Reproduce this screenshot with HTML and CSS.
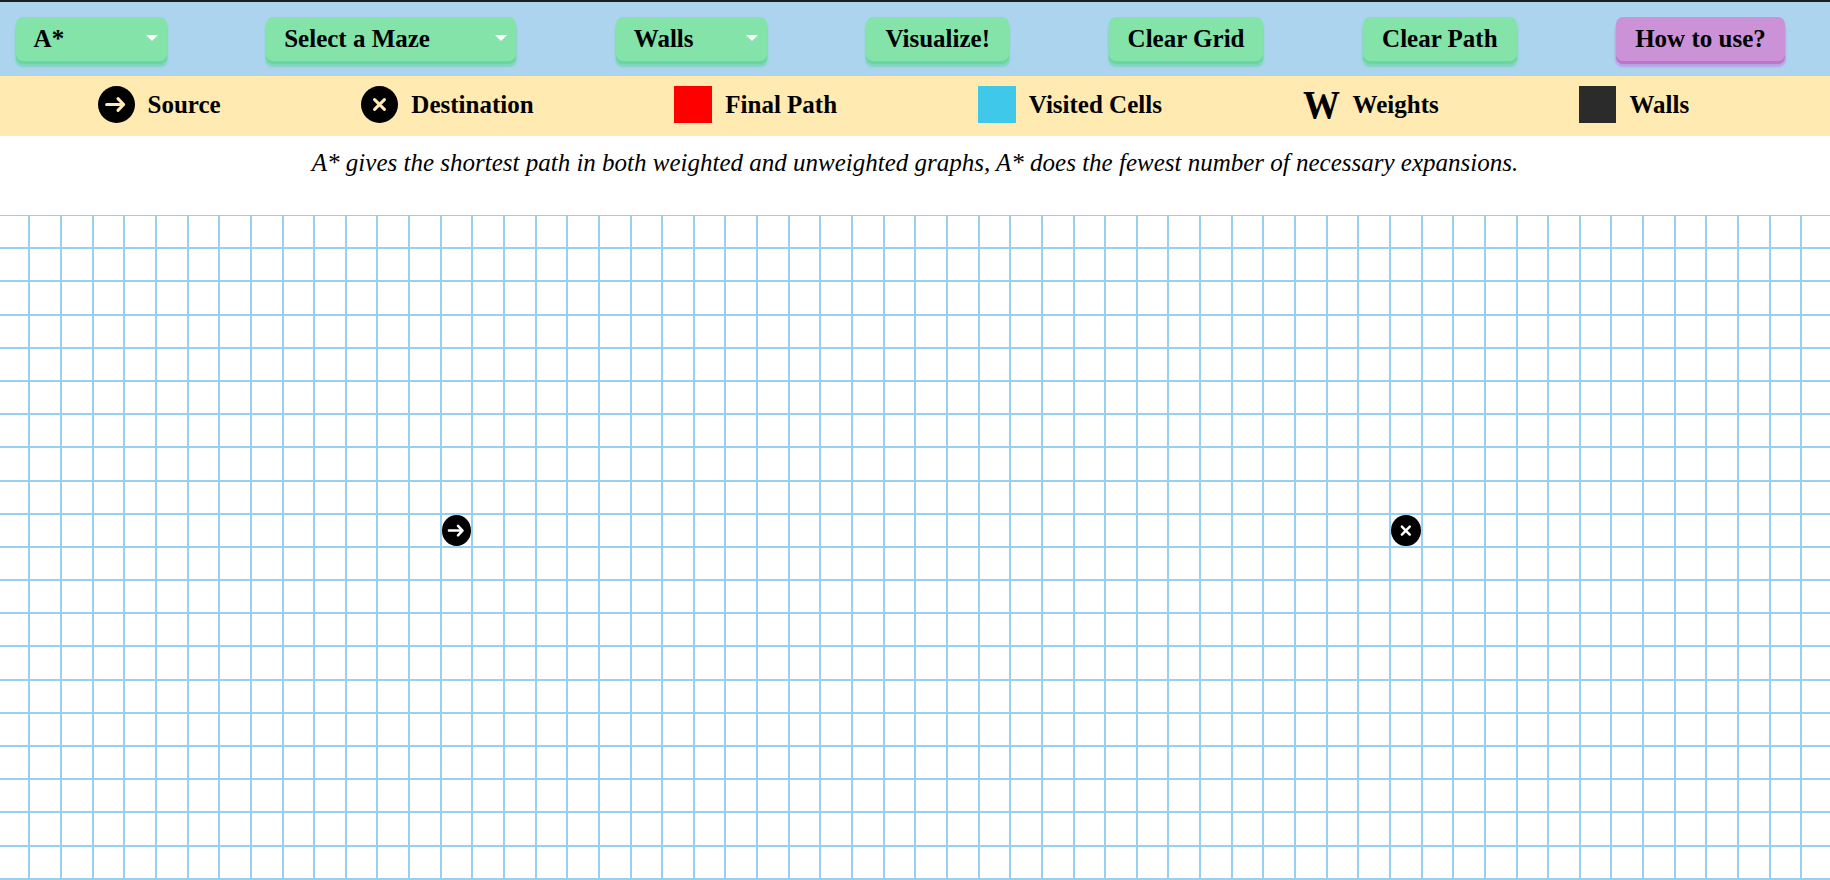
FILE: index.html
```html
<!DOCTYPE html>
<html lang="en">
<head>
<meta charset="utf-8">
<title>Pathfinding Visualizer</title>
<link rel="stylesheet" href="styles.css">
</head>
<body>
<nav class="toolbar">
  <button class="btn select w-sm"><span>A*</span><i class="caret"></i></button>
  <button class="btn select w-lg"><span>Select a Maze</span><i class="caret"></i></button>
  <button class="btn select w-sm"><span>Walls</span><i class="caret"></i></button>
  <button class="btn">Visualize!</button>
  <button class="btn">Clear Grid</button>
  <button class="btn">Clear Path</button>
  <button class="btn help">How to use?</button>
</nav>
<section class="legend">
  <div class="item"><span class="token legend-token"><svg viewBox="0 0 30 30"><path d="M7 15H20.5M16.2 10.2L20.8 15L16.2 19.8"/></svg></span>Source</div>
  <div class="item"><span class="token legend-token"><svg viewBox="0 0 30 30"><path d="M11 11L19 19M19 11L11 19"/></svg></span>Destination</div>
  <div class="item"><span class="swatch path"></span>Final Path</div>
  <div class="item"><span class="swatch visited"></span>Visited Cells</div>
  <div class="item"><span class="weight">W</span>Weights</div>
  <div class="item"><span class="swatch wall"></span>Walls</div>
</section>
<p class="description">A* gives the shortest path in both weighted and unweighted graphs, A* does the fewest number of necessary expansions.</p>
<main class="grid" id="grid"></main>
<template id="source-icon"><span class="token"><svg viewBox="0 0 30 30"><path d="M7 15H20.5M16.2 10.2L20.8 15L16.2 19.8"/></svg></span></template>
<template id="target-icon"><span class="token"><svg viewBox="0 0 30 30"><path d="M11 11L19 19M19 11L11 19"/></svg></span></template>
<script src="grid.js"></script>
</body>
</html>
```
FILE: styles.css
```css
* { box-sizing: border-box; }
html, body { margin: 0; height: 100%; }
body {
  display: flex;
  flex-direction: column;
  height: 880px;
  overflow: hidden;
  background: #fff;
  color: #000;
  font-family: "Liberation Serif", "Times New Roman", serif;
  font-size: 25px;
  font-weight: 700;
  border-top: 2px solid #1c1f22;
}
.toolbar {
  display: flex;
  align-items: flex-start;
  gap: 99.6px;
  height: 74px;
  padding: 15px 0 0 15.6px;
  background: #add4ef;
}
.btn {
  display: flex;
  align-items: center;
  justify-content: space-between;
  height: 44px;
  padding: 0 19px;
  border: 0;
  border-radius: 7px;
  background: #83e3a9;
  color: #000;
  font: inherit;
  box-shadow: 0 3px 0 #6bd5a0, 0 5px 2px 1px rgba(110, 215, 170, .7);
}
.select { padding: 0 9px 0 18px; }
.w-sm { width: 151px; }
.w-lg { width: 250px; }
.help {
  background: #cb92d7;
  box-shadow: 0 3px 0 #bb76cc, 0 5px 2px 1px rgba(186, 150, 222, .8);
}
.caret {
  width: 0;
  height: 0;
  margin-bottom: 2px;
  border-left: 6px solid transparent;
  border-right: 6px solid transparent;
  border-top: 6.5px solid #fff;
}
.legend {
  display: flex;
  align-items: center;
  gap: 140.7px;
  height: 60px;
  padding: 0 0 4px 97.5px;
  background: #ffeab2;
}
.item {
  display: flex;
  align-items: center;
  gap: 13px;
  line-height: 37px;
}
.token {
  display: flex;
  width: 100%;
  height: 100%;
  border-radius: 50%;
  background: #000;
  color: #fff;
}
.token svg {
  width: 100%;
  height: 100%;
  fill: none;
  stroke: currentColor;
  stroke-width: 2.5;
  stroke-linecap: round;
  stroke-linejoin: round;
}
.legend-token {
  width: 37px;
  height: 37px;
  color: #ffeab2;
}
.swatch {
  width: 38px;
  height: 37px;
}
.path { background: #f00; }
.visited { background: #40c8ea; }
.wall { width: 37px; background: #2b2b2b; }
.weight {
  width: 37px;
  font-size: 40px;
  line-height: 37px;
  transform: scaleX(.925);
  transform-origin: left center;
}
.description {
  height: 79px;
  margin: 0;
  padding-top: 12px;
  font-weight: 400;
  font-style: italic;
  line-height: 30px;
  text-align: center;
}
.grid {
  display: grid;
  flex: none;
  grid-template-columns: repeat(58, 31.65px);
  grid-auto-rows: 33.2px;
  width: 1836px;
  margin-left: -1.25px;
  border-top: 1px solid #97d0f0;
}
.cell {
  border-right: 2px solid #97d0f0;
  border-bottom: 2px solid #97d0f0;
}
```
FILE: grid.js
```js
var grid = document.getElementById('grid');
for (var r = 0; r < 20; r++) {
  for (var c = 0; c < 58; c++) {
    var cell = document.createElement('div');
    cell.className = 'cell';
    if (r === 9 && (c === 14 || c === 44)) {
      var tpl = document.getElementById(c === 14 ? 'source-icon' : 'target-icon');
      cell.appendChild(tpl.content.cloneNode(true));
    }
    grid.appendChild(cell);
  }
}
```
